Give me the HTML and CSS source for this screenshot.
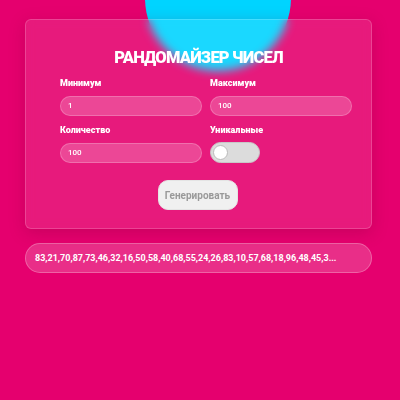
FILE: index.html
```html
<!DOCTYPE html>
<html lang="ru">
<head>
<meta charset="utf-8">
<title>Рандомайзер чисел</title>
<link rel="stylesheet" href="styles.css">
</head>
<body>
<div class="blob"></div>
<main class="page">
  <section class="card">
    <h1 class="title">РАНДОМАЙЗЕР ЧИСЕЛ</h1>
    <div class="form">
      <div class="field">
        <label class="label">Минимум</label>
        <div class="input">1</div>
      </div>
      <div class="field">
        <label class="label">Максимум</label>
        <div class="input">100</div>
      </div>
      <div class="field">
        <label class="label">Количество</label>
        <div class="input">100</div>
      </div>
      <div class="field">
        <label class="label">Уникальные</label>
        <div class="toggle"><span class="knob"></span></div>
      </div>
    </div>
    <div class="actions">
      <button class="btn">Генерировать</button>
    </div>
  </section>
  <div class="result">83,21,70,87,73,46,32,16,50,58,40,68,55,24,26,83,10,57,68,18,96,48,45,3...</div>
</main>
</body>
</html>
```
FILE: styles.css
```css
html, body {
  margin: 0;
  padding: 0;
}
body {
  background: #e5006e;
  font-family: Roboto, "Noto Sans", sans-serif;
  color: #fff;
  width: 400px;
  height: 400px;
  overflow: hidden;
  position: relative;
}
.blob {
  position: absolute;
  left: 145px;
  top: -75px;
  width: 146px;
  height: 146px;
  border-radius: 50%;
  background: #00d4ff;
}
.page {
  position: relative;
  padding: 19px 28px 0 25px;
  display: flex;
  flex-direction: column;
  gap: 14px;
}
.card {
  box-sizing: border-box;
  width: 347px;
  height: 210px;
  border-radius: 6px;
  background: rgba(255, 255, 255, 0.1);
  border: 1px solid rgba(255, 255, 255, 0.18);
  backdrop-filter: blur(5px);
  box-shadow: 0 4px 16px rgba(120, 0, 50, 0.25);
  padding: 28px 19px 0 34px;
}
.title {
  margin: 0 0 9px -15px;
  font-size: 16.5px;
  font-weight: 900;
  text-align: center;
  line-height: 20px;
  letter-spacing: -0.8px;
}
.form {
  display: grid;
  grid-template-columns: 142px 142px;
  column-gap: 8px;
  row-gap: 8px;
}
.field {
  display: flex;
  flex-direction: column;
  gap: 7px;
}
.label {
  font-size: 9px;
  font-weight: 900;
  line-height: 12px;
}
.input {
  box-sizing: border-box;
  height: 20px;
  border-radius: 10px;
  background: rgba(255, 255, 255, 0.2);
  border: 1px solid rgba(255, 255, 255, 0.22);
  font-size: 8px;
  font-weight: 500;
  line-height: 18px;
  padding-left: 7px;
}
.toggle {
  box-sizing: border-box;
  width: 50px;
  height: 21px;
  border-radius: 11px;
  background: #dcdcdc;
  border: 1px solid #c8c8c8;
  padding: 2px;
  margin-top: -1px;
}
.knob {
  display: block;
  box-sizing: border-box;
  width: 15px;
  height: 15px;
  border-radius: 50%;
  background: #fff;
  border: 1px solid #bbb;
}
.actions {
  display: flex;
  justify-content: center;
  padding-right: 17px;
  margin-top: 17px;
}
.btn {
  width: 80px;
  height: 30px;
  border: 1px solid #e4e4e4;
  border-radius: 10px;
  background: #f0f0f0;
  color: #999;
  font-family: Roboto, sans-serif;
  font-size: 10px;
  font-weight: 700;
  padding: 0;
}
.result {
  box-sizing: border-box;
  width: 347px;
  height: 30px;
  border-radius: 15px;
  background: rgba(255, 255, 255, 0.18);
  border: 1px solid rgba(255, 255, 255, 0.25);
  font-size: 9px;
  font-weight: 700;
  line-height: 28px;
  padding-left: 9px;
  white-space: nowrap;
  overflow: hidden;
}
```
